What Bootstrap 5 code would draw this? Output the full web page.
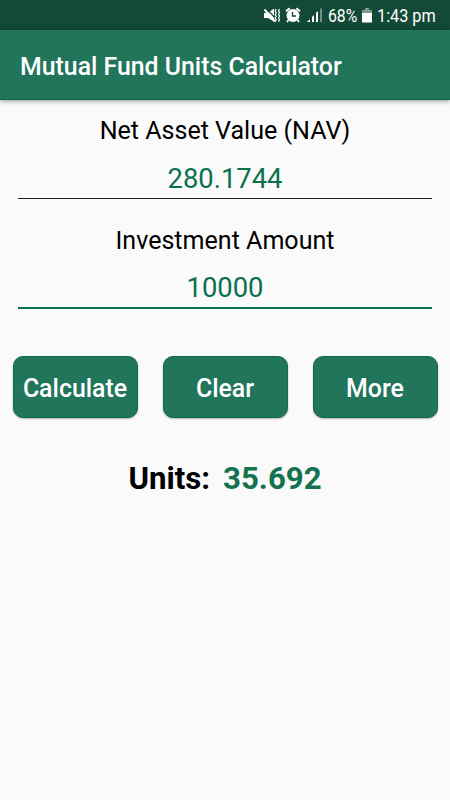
<!DOCTYPE html>
<html lang="en">
<head>
<meta charset="utf-8">
<meta name="viewport" content="width=device-width, initial-scale=1">
<title>Mutual Fund Units Calculator</title>
<link href="https://cdn.jsdelivr.net/npm/bootstrap@5.3.0/dist/css/bootstrap.min.css" rel="stylesheet">
<style>
body{font-family:Roboto,"Liberation Sans",sans-serif;background:#fafafa;color:#000;min-height:800px;overflow:hidden}
.status-bar{height:30px;background:#124937;color:#fff;padding-right:14px}
.status-bar svg{display:block;flex:none}
.status-text{font-size:19px;line-height:30px;padding-top:1px;white-space:nowrap;transform-origin:left center}
.signal-icon{margin-left:6px}
.battery-icon{margin-left:5px}
.pct{width:29px;margin-left:5px;transform:scaleX(.83)}
.clock{width:59px;margin-left:5px;transform:scaleX(.855)}
.app-bar{height:70px;background:#21755b;padding:5px 20px 0;box-shadow:0 1px 5px rgba(0,0,0,.42);border-bottom:1px solid #0b6747}
.app-title{font-size:24.85px;font-weight:500;line-height:30px;color:#fff}
.field-group{padding-top:16px}
.field-group + .field-group{padding-top:27px}
.field-label{font-size:25.05px;line-height:30px}
.field-value{font-size:27.4px;line-height:34px;color:#0b704d;margin:0 18px;padding:16px 0 2px;border-bottom:1px solid #1c1c1c}
.field-value.focused{padding-top:15px;border-bottom:2px solid #0b704d}
.actions{padding:0 12.5px;gap:25px;margin-top:47px}
.btn-action{height:62px;border-radius:10px;background:#21755b;border:1px solid #0d6b4b;color:#fff;font-size:24.9px;font-weight:500;padding:4px 0 0;box-shadow:0 1px 2px rgba(0,0,0,.28)}
.btn-action:hover{background:#1b674f;color:#fff}
.result{font-size:31.2px;line-height:38px;gap:13px;margin-top:42px}
.result-value{color:#15724f}
</style>
</head>
<body>
<div class="status-bar d-flex align-items-center justify-content-end">
  <svg width="18" height="18" viewBox="0 0 18 18"><path d="M1 7h4l6-4.500v13L5 12H1z" fill="#fff"/><path d="M3 2l10 11" stroke="#124937" stroke-width="1.200"/><path d="M1.500 3.500L12 15.500" stroke="#fff" stroke-width="2"/><path d="M13.200 3l-1 1.800 1 1.800-1 1.800 1 1.800-1 1.800 1 1.800-1 1.800M16.500 3l-1 1.800 1 1.800-1 1.800 1 1.800-1 1.800 1 1.800-1 1.800" fill="none" stroke="#fff" stroke-width="1.200"/></svg>
  <svg class="ms-1" width="16" height="18" viewBox="0 0 16 18"><circle cx="8" cy="9.500" r="6.500" fill="#fff"/><path d="M1 5.200l3.700-3M15 5.200l-3.700-3" stroke="#fff" stroke-width="2"/><path d="M3.500 14L2 16M12.500 14l1.500 2" stroke="#fff" stroke-width="1.800"/><path d="M7.500 6v4H11" fill="none" stroke="#124937" stroke-width="1.400"/></svg>
  <svg class="signal-icon" width="16" height="18" viewBox="0 0 16 18"><path d="M0 16l3-3v3zM5 11l2-2v7H5zM9 7l2-2v11H9z" fill="#fff"/><path d="M13 3l2-1v14h-2z" fill="#fff" opacity=".4"/></svg>
  <span class="status-text pct">68%</span>
  <svg class="battery-icon" width="10" height="18" viewBox="0 0 10 18"><path d="M3 2h4v2h3v4H0V4h3z" fill="#7d9c91"/><path d="M0 7h10v9.500H0z" fill="#fff"/></svg>
  <span class="status-text clock">1:43 pm</span>
</div>
<header class="app-bar d-flex align-items-center">
  <h1 class="app-title mb-0 text-nowrap">Mutual Fund Units Calculator</h1>
</header>
<main class="text-center">
  <section class="field-group">
    <div class="field-label">Net Asset Value (NAV)</div>
    <div class="field-value">280.1744</div>
  </section>
  <section class="field-group">
    <div class="field-label">Investment Amount</div>
    <div class="field-value focused">10000</div>
  </section>
  <div class="actions d-flex">
    <button class="btn btn-action flex-fill w-100" type="button">Calculate</button>
    <button class="btn btn-action flex-fill w-100" type="button">Clear</button>
    <button class="btn btn-action flex-fill w-100" type="button">More</button>
  </div>
  <div class="result d-flex justify-content-center fw-bold">
    <span>Units:</span><span class="result-value">35.692</span>
  </div>
</main>
<script src="https://cdn.jsdelivr.net/npm/bootstrap@5.3.0/dist/js/bootstrap.bundle.min.js"></script>
</body>
</html>
